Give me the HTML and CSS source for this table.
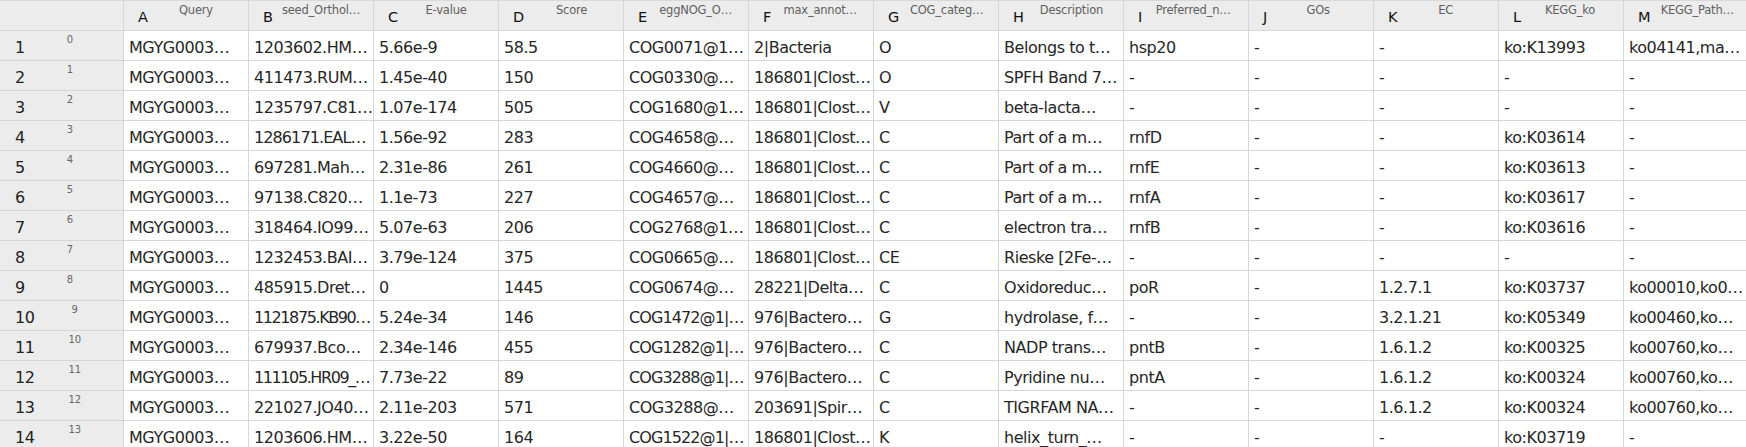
FILE: index.html
```html
<!DOCTYPE html>
<html>
<head>
<meta charset="utf-8">
<link rel="stylesheet" href="styles.css">
</head>
<body>
<div class="sheet">
  <div class="row head">
    <div class="rh"></div>
    <div class="hc"><span class="col">A</span><span class="lbl">Query</span></div>
    <div class="hc"><span class="col">B</span><span class="lbl">seed_Orthol…</span></div>
    <div class="hc"><span class="col">C</span><span class="lbl">E-value</span></div>
    <div class="hc"><span class="col">D</span><span class="lbl">Score</span></div>
    <div class="hc"><span class="col">E</span><span class="lbl">eggNOG_O…</span></div>
    <div class="hc"><span class="col">F</span><span class="lbl">max_annot…</span></div>
    <div class="hc"><span class="col">G</span><span class="lbl">COG_categ…</span></div>
    <div class="hc"><span class="col">H</span><span class="lbl">Description</span></div>
    <div class="hc"><span class="col">I</span><span class="lbl">Preferred_n…</span></div>
    <div class="hc"><span class="col">J</span><span class="lbl">GOs</span></div>
    <div class="hc"><span class="col">K</span><span class="lbl">EC</span></div>
    <div class="hc"><span class="col">L</span><span class="lbl">KEGG_ko</span></div>
    <div class="hc"><span class="col">M</span><span class="lbl">KEGG_Path…</span></div>
  </div>

  <div class="row"><div class="rh"><span class="num">1</span><span class="idx">0</span></div>
    <div class="c">MGYG0003…</div><div class="c">1203602.HM…</div><div class="c">5.66e-9</div><div class="c">58.5</div><div class="c">COG0071@1…</div><div class="c">2|Bacteria</div><div class="c">O</div><div class="c">Belongs to t…</div><div class="c">hsp20</div><div class="c">-</div><div class="c">-</div><div class="c">ko:K13993</div><div class="c">ko04141,ma…</div></div>

  <div class="row"><div class="rh"><span class="num">2</span><span class="idx">1</span></div>
    <div class="c">MGYG0003…</div><div class="c">411473.RUM…</div><div class="c">1.45e-40</div><div class="c">150</div><div class="c">COG0330@…</div><div class="c">186801|Clost…</div><div class="c">O</div><div class="c">SPFH Band 7…</div><div class="c">-</div><div class="c">-</div><div class="c">-</div><div class="c">-</div><div class="c">-</div></div>

  <div class="row"><div class="rh"><span class="num">3</span><span class="idx">2</span></div>
    <div class="c">MGYG0003…</div><div class="c">1235797.C81…</div><div class="c">1.07e-174</div><div class="c">505</div><div class="c">COG1680@1…</div><div class="c">186801|Clost…</div><div class="c">V</div><div class="c">beta-lacta…</div><div class="c">-</div><div class="c">-</div><div class="c">-</div><div class="c">-</div><div class="c">-</div></div>

  <div class="row"><div class="rh"><span class="num">4</span><span class="idx">3</span></div>
    <div class="c">MGYG0003…</div><div class="c tight">1286171.EAL2…</div><div class="c">1.56e-92</div><div class="c">283</div><div class="c">COG4658@…</div><div class="c">186801|Clost…</div><div class="c">C</div><div class="c">Part of a m…</div><div class="c">rnfD</div><div class="c">-</div><div class="c">-</div><div class="c">ko:K03614</div><div class="c">-</div></div>

  <div class="row"><div class="rh"><span class="num">5</span><span class="idx">4</span></div>
    <div class="c">MGYG0003…</div><div class="c">697281.Mah…</div><div class="c">2.31e-86</div><div class="c">261</div><div class="c">COG4660@…</div><div class="c">186801|Clost…</div><div class="c">C</div><div class="c">Part of a m…</div><div class="c">rnfE</div><div class="c">-</div><div class="c">-</div><div class="c">ko:K03613</div><div class="c">-</div></div>

  <div class="row"><div class="rh"><span class="num">6</span><span class="idx">5</span></div>
    <div class="c">MGYG0003…</div><div class="c">97138.C820…</div><div class="c">1.1e-73</div><div class="c">227</div><div class="c">COG4657@…</div><div class="c">186801|Clost…</div><div class="c">C</div><div class="c">Part of a m…</div><div class="c">rnfA</div><div class="c">-</div><div class="c">-</div><div class="c">ko:K03617</div><div class="c">-</div></div>

  <div class="row"><div class="rh"><span class="num">7</span><span class="idx">6</span></div>
    <div class="c">MGYG0003…</div><div class="c">318464.IO99…</div><div class="c">5.07e-63</div><div class="c">206</div><div class="c">COG2768@1…</div><div class="c">186801|Clost…</div><div class="c">C</div><div class="c">electron tra…</div><div class="c">rnfB</div><div class="c">-</div><div class="c">-</div><div class="c">ko:K03616</div><div class="c">-</div></div>

  <div class="row"><div class="rh"><span class="num">8</span><span class="idx">7</span></div>
    <div class="c">MGYG0003…</div><div class="c">1232453.BAI…</div><div class="c">3.79e-124</div><div class="c">375</div><div class="c">COG0665@…</div><div class="c">186801|Clost…</div><div class="c">CE</div><div class="c">Rieske [2Fe-…</div><div class="c">-</div><div class="c">-</div><div class="c">-</div><div class="c">-</div><div class="c">-</div></div>

  <div class="row"><div class="rh"><span class="num">9</span><span class="idx">8</span></div>
    <div class="c">MGYG0003…</div><div class="c">485915.Dret…</div><div class="c">0</div><div class="c">1445</div><div class="c">COG0674@…</div><div class="c">28221|Delta…</div><div class="c">C</div><div class="c">Oxidoreduc…</div><div class="c">poR</div><div class="c">-</div><div class="c">1.2.7.1</div><div class="c">ko:K03737</div><div class="c">ko00010,ko0…</div></div>

  <div class="row"><div class="rh"><span class="num">10</span><span class="idx">9</span></div>
    <div class="c">MGYG0003…</div><div class="c tighter">1121875.KB90…</div><div class="c">5.24e-34</div><div class="c">146</div><div class="c tight">COG1472@1|…</div><div class="c">976|Bactero…</div><div class="c">G</div><div class="c">hydrolase, f…</div><div class="c">-</div><div class="c">-</div><div class="c">3.2.1.21</div><div class="c">ko:K05349</div><div class="c">ko00460,ko…</div></div>

  <div class="row"><div class="rh"><span class="num">11</span><span class="idx">10</span></div>
    <div class="c">MGYG0003…</div><div class="c">679937.Bco…</div><div class="c">2.34e-146</div><div class="c">455</div><div class="c tight">COG1282@1|…</div><div class="c">976|Bactero…</div><div class="c">C</div><div class="c">NADP trans…</div><div class="c">pntB</div><div class="c">-</div><div class="c">1.6.1.2</div><div class="c">ko:K00325</div><div class="c">ko00760,ko…</div></div>

  <div class="row"><div class="rh"><span class="num">12</span><span class="idx">11</span></div>
    <div class="c">MGYG0003…</div><div class="c tighter">111105.HR09_…</div><div class="c">7.73e-22</div><div class="c">89</div><div class="c tight">COG3288@1|…</div><div class="c">976|Bactero…</div><div class="c">C</div><div class="c">Pyridine nu…</div><div class="c">pntA</div><div class="c">-</div><div class="c">1.6.1.2</div><div class="c">ko:K00324</div><div class="c">ko00760,ko…</div></div>

  <div class="row"><div class="rh"><span class="num">13</span><span class="idx">12</span></div>
    <div class="c">MGYG0003…</div><div class="c">221027.JO40…</div><div class="c">2.11e-203</div><div class="c">571</div><div class="c">COG3288@…</div><div class="c">203691|Spir…</div><div class="c">C</div><div class="c">TIGRFAM NA…</div><div class="c">-</div><div class="c">-</div><div class="c">1.6.1.2</div><div class="c">ko:K00324</div><div class="c">ko00760,ko…</div></div>

  <div class="row"><div class="rh"><span class="num">14</span><span class="idx">13</span></div>
    <div class="c">MGYG0003…</div><div class="c">1203606.HM…</div><div class="c">3.22e-50</div><div class="c">164</div><div class="c tight">COG1522@1|…</div><div class="c">186801|Clost…</div><div class="c">K</div><div class="c">helix_turn_…</div><div class="c">-</div><div class="c">-</div><div class="c">-</div><div class="c">ko:K03719</div><div class="c">-</div></div>
</div>
</body>
</html>
```

FILE: styles.css
```css
html, body {
  margin: 0;
  padding: 0;
  background: #ffffff;
  overflow: hidden;
}

.sheet {
  width: 1749px;
  font-family: "DejaVu Sans", "Liberation Sans", sans-serif;
  color: #262626;
  border-top: 1px solid #d9d9d9;
}

.row {
  display: flex;
  height: 30px;
  box-sizing: border-box;
  border-bottom: 1px solid #d6d6d6;
}

.row.head {
  background: #ececec;
}

.rh {
  flex: 0 0 124px;
  box-sizing: border-box;
  border-right: 1px solid #d6d6d6;
  background: #ececec;
  display: flex;
  padding-left: 15px;
}

.head .rh {
  padding-left: 0;
}

.num {
  font-size: 16px;
  line-height: 24px;
  padding-top: 5px;
  color: #222;
  letter-spacing: -0.4px;
}

.idx {
  flex: 1;
  text-align: center;
  font-size: 10px;
  line-height: 12px;
  padding-top: 3px;
  color: #666;
  padding-right: 8px;
}

.hc {
  flex: 0 0 125px;
  box-sizing: border-box;
  border-right: 1px solid #d6d6d6;
  display: flex;
  overflow: hidden;
}

.col {
  padding-left: 14px;
  padding-top: 8px;
  font-size: 14.5px;
  line-height: 16px;
  color: #111;
}

.lbl {
  flex: 1;
  min-width: 0;
  text-align: center;
  font-size: 11.5px;
  line-height: 13px;
  padding-top: 3px;
  color: #5f5f5f;
  white-space: nowrap;
  overflow: hidden;
  text-overflow: ellipsis;
  padding-right: 4px;
  letter-spacing: -0.2px;
}

.c {
  flex: 0 0 125px;
  box-sizing: border-box;
  border-right: 1px solid #d6d6d6;
  padding: 5px 0 0 5px;
  font-size: 16px;
  line-height: 24px;
  letter-spacing: -0.45px;
  white-space: nowrap;
  overflow: hidden;
  text-overflow: ellipsis;
}

.c.tight {
  letter-spacing: -0.9px;
}

.c.tighter {
  letter-spacing: -1.4px;
}
```
